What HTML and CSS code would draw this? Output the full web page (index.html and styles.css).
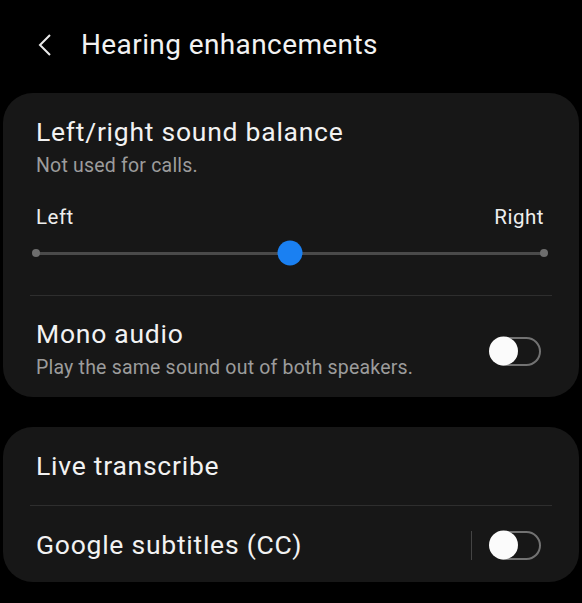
FILE: index.html
```html
<!DOCTYPE html>
<html>
<head>
<meta charset="utf-8">
<link rel="stylesheet" href="styles.css">
</head>
<body>
<header class="appbar">
  <svg class="back" width="16" height="24" viewBox="0 0 16 24"><path d="M13 2 L3 12 L13 22" fill="none" stroke="#eaeaea" stroke-width="2"/></svg>
  <h1 class="appbar-title">Hearing enhancements</h1>
</header>

<section class="card">
  <div class="item">
    <div class="item-title">Left/right sound balance</div>
    <div class="item-sub">Not used for calls.</div>
  </div>
  <div class="balance-labels"><span>Left</span><span>Right</span></div>
  <div class="slider">
    <span class="dot"></span>
    <span class="track"></span>
    <span class="dot"></span>
    <span class="thumb" style="left: 50%"></span>
  </div>
  <div class="divider"></div>
  <div class="item row">
    <div class="text">
      <div class="item-title">Mono audio</div>
      <div class="item-sub">Play the same sound out of both speakers.</div>
    </div>
    <span class="switch"><span class="knob"></span></span>
  </div>
</section>

<section class="card card2">
  <div class="item">
    <div class="item-title">Live transcribe</div>
  </div>
  <div class="divider div2"></div>
  <div class="item row row2">
    <div class="item-title">Google subtitles (CC)</div>
    <div class="ctrl">
      <span class="vsep"></span>
      <span class="switch"><span class="knob"></span></span>
    </div>
  </div>
</section>
</body>
</html>
```

FILE: styles.css
```css
html, body {
  margin: 0;
  padding: 0;
  background: #000;
}
body {
  font-family: Roboto, "Noto Sans", sans-serif;
  color: #f2f2f2;
  width: 582px;
  height: 603px;
  overflow: hidden;
}
.appbar {
  display: flex;
  align-items: center;
  height: 93px;
  padding-left: 37px;
  box-sizing: border-box;
  padding-bottom: 4px;
}
.back {
  display: block;
}
.appbar-title {
  margin: 0 0 0 28px;
  font-size: 28px;
  font-weight: 400;
  color: #f2f2f2;
  letter-spacing: 0.4px;
}
.card {
  background: #171717;
  margin: 0 3px;
  border-radius: 30px;
  padding: 24px 0 18px;
}
.card2 {
  margin-top: 30px;
  padding-bottom: 22px;
}
.item {
  padding: 0 33px;
}
.item-title {
  font-size: 26.5px;
  line-height: 30px;
  letter-spacing: 0.75px;
  color: #f2f2f2;
}
.item-sub {
  margin-top: 8px;
  font-size: 19.5px;
  line-height: 22px;
  letter-spacing: 0.2px;
  color: #9c9c9c;
}
.balance-labels {
  display: flex;
  justify-content: space-between;
  margin-top: 28px;
  padding: 0 35px 0 33px;
  font-size: 20.5px;
  line-height: 24px;
  letter-spacing: 0.5px;
  color: #eeeeee;
}
.slider {
  position: relative;
  display: flex;
  align-items: center;
  margin: 11px 31px 0 29px;
  height: 26px;
}
.track {
  flex: 1;
  height: 3px;
  background: #4a4a4a;
  margin: 0 -2px;
}
.dot {
  width: 8px;
  height: 8px;
  border-radius: 50%;
  background: #6e6e6e;
  position: relative;
  z-index: 1;
}
.thumb {
  position: absolute;
  top: 50%;
  width: 25px;
  height: 25px;
  border-radius: 50%;
  background: #1a80f2;
  transform: translate(-50%, -50%);
  z-index: 2;
}
.divider {
  height: 1px;
  background: #2e2e2e;
  margin: 29px 27px 23px;
}
.div2 {
  margin: 24px 27px 24px;
}
.row {
  display: flex;
  align-items: center;
  justify-content: space-between;
  padding-right: 38px;
}
.row .item-sub {
  margin-top: 8px;
}
.switch {
  position: relative;
  display: block;
  width: 46px;
  height: 25px;
  border: 2px solid #727272;
  border-radius: 15px;
  margin-top: 4px;
}
.row2 .switch {
  margin-top: 0;
}
.knob {
  position: absolute;
  left: -4px;
  top: 50%;
  width: 29px;
  height: 29px;
  border-radius: 50%;
  background: #fbfbfb;
  transform: translateY(-50%);
}
.ctrl {
  display: flex;
  align-items: center;
  gap: 19px;
}
.vsep {
  display: block;
  width: 1px;
  height: 29px;
  background: #444;
}
```
